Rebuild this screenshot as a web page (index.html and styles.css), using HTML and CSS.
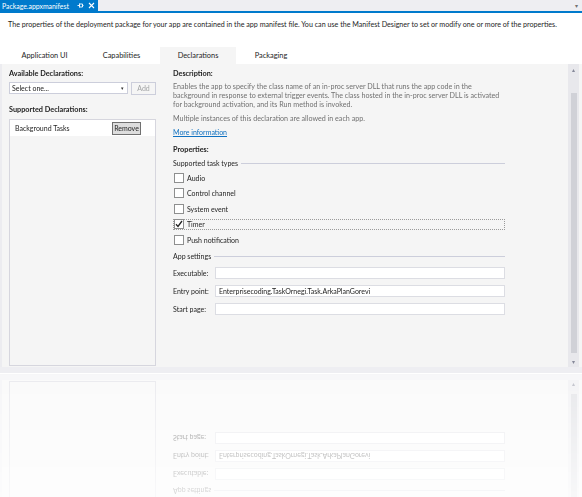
FILE: index.html
```html
<!DOCTYPE html>
<html>
<head>
    <title>Package.appxmanifest</title>
    <link rel="stylesheet" href="styles.css">
</head>
<body>
    <div class="doc-bar">
        <div class="doc-tab">
            <span class="doc-name">Package.appxmanifest</span>
            <svg class="doc-pin" width="7" height="7" viewBox="0 0 7 7"><path d="M0.5 3.5h2M2.5 1.5v4M2.5 2h3v3h-3M5.5 3.5h1" stroke="#fff" stroke-width="0.9" fill="none"/></svg>
            <svg class="doc-close" width="7" height="7" viewBox="0 0 7 7"><path d="M1 1l5 5M6 1l-5 5" stroke="#fff" stroke-width="1.1"/></svg>
        </div>
        <div class="doc-menu">&#9662;</div>
    </div>
    <div class="doc-line"></div>

    <p class="intro">The properties of the deployment package for your app are contained in the app manifest file. You can use the Manifest Designer to set or modify one or more of the properties.</p>

    <div class="tabs">
        <div class="tab">Application UI</div>
        <div class="tab">Capabilities</div>
        <div class="tab active">Declarations</div>
        <div class="tab">Packaging</div>
    </div>

    <div class="workspace">
        <div class="designer">
            <div class="side">
                <h3>Available Declarations:</h3>
                <div class="add-row">
                    <div class="select">Select one...<span class="select-arrow">&#9662;</span></div>
                    <div class="btn disabled">Add</div>
                </div>
                <h3>Supported Declarations:</h3>
                <div class="decl-list">
                    <div class="decl-item">
                        <span>Background Tasks</span>
                        <div class="btn remove">Remove</div>
                    </div>
                </div>
            </div>

            <div class="details">
                <h3>Description:</h3>
                <p class="desc">Enables the app to specify the class name of an in-proc server DLL that runs the app code in the background in response to external trigger events. The class hosted in the in-proc server DLL is activated for background activation, and its Run method is invoked.</p>
                <p class="desc">Multiple instances of this declaration are allowed in each app.</p>
                <a class="more" href="#">More information</a>

                <h3 class="props">Properties:</h3>
                <div class="group-title"><span>Supported task types</span></div>
                <div class="checks">
                    <label class="check"><span class="box"></span>Audio</label>
                    <label class="check"><span class="box"></span>Control channel</label>
                    <label class="check"><span class="box"></span>System event</label>
                    <label class="check focused"><span class="box"><svg width="8" height="8" viewBox="0 0 8 8"><path d="M1 4.2l2 2.2L7 1" stroke="#222" stroke-width="1.3" fill="none"/></svg></span>Timer</label>
                    <label class="check"><span class="box"></span>Push notification</label>
                </div>

                <div class="group-title settings"><span>App settings</span></div>
                <div class="field">
                    <span class="field-label">Executable:</span>
                    <div class="input"></div>
                </div>
                <div class="field">
                    <span class="field-label">Entry point:</span>
                    <div class="input">Enterprisecoding.TaskOrnegi.Task.ArkaPlanGorevi</div>
                </div>
                <div class="field">
                    <span class="field-label">Start page:</span>
                    <div class="input"></div>
                </div>
            </div>

            <div class="scrollbar">
                <span class="arrow">&#9652;</span>
                <div class="thumb"></div>
                <span class="arrow">&#9662;</span>
            </div>
        </div>
        <div class="status-strip"></div>
    </div>
</body>
</html>
```

FILE: styles.css
```css
* {
    box-sizing: border-box;
}
body {
    width: 582px;
    height: 497px;
    margin: 0;
    overflow: hidden;
    font-family: Lato, "Open Sans", sans-serif;
    font-size: 7px;
    color: #1e1e1e;
    background-color: #ffffff;
}
.doc-bar {
    display: flex;
    height: 11px;
    background-color: #eeeef2;
}
.doc-tab {
    display: flex;
    align-items: center;
    width: 98px;
    padding-left: 2px;
    background-color: #007acc;
    color: #ffffff;
    font-size: 6.9px;
}
.doc-name {
    flex: 1;
}
.doc-pin {
    margin-right: 4px;
}
.doc-close {
    margin-right: 3px;
}
.doc-menu {
    margin-left: auto;
    margin-right: 4px;
    color: #717171;
    font-size: 6px;
    line-height: 11px;
}
.doc-line {
    height: 2px;
    background-color: #007acc;
}
.intro {
    margin: 0;
    padding: 7px 8px 0 8px;
    height: 34px;
    line-height: 10px;
    font-size: 7.15px;
    white-space: nowrap;
}
.tabs {
    display: flex;
    height: 17px;
    padding-left: 6px;
}
.tab {
    width: 77px;
    text-align: center;
    line-height: 17px;
    font-size: 7.4px;
}
.tab.active {
    width: 76px;
    background-color: #f5f5f5;
}
.tab:last-child {
    width: 70px;
}
.workspace {
    -webkit-box-reflect: below 1px linear-gradient(to bottom, transparent 40%, rgba(0, 0, 0, 0.5));
}
.designer {
    display: flex;
    height: 303px;
    padding-left: 7px;
    background-color: #f5f5f5;
    border-left: 2px solid #ececf0;
}
.status-strip {
    height: 6px;
    background-color: #eeeef2;
}
h3 {
    margin: 0;
    font-size: 7.3px;
    font-weight: bold;
    line-height: 10px;
}
.side {
    display: flex;
    flex-direction: column;
    width: 147px;
    padding-top: 5px;
}
.add-row {
    display: flex;
    gap: 3px;
    margin-top: 3px;
    margin-bottom: 10px;
}
.select {
    position: relative;
    width: 119px;
    height: 12px;
    padding-left: 2px;
    line-height: 11px;
    background-color: #ffffff;
    border: 1px solid #cccedb;
}
.select-arrow {
    position: absolute;
    right: 3px;
    top: 0;
    font-size: 5px;
    color: #333;
}
.btn {
    height: 13px;
    text-align: center;
    line-height: 11px;
    border: 1px solid #cccedb;
}
.btn.disabled {
    width: 25px;
    color: #a2a4a5;
    background-color: #f5f5f5;
}
.decl-list {
    flex: 1;
    margin-top: 4px;
    margin-bottom: 1px;
    border: 1px solid #d6d6de;
    background-color: #f5f5f5;
}
.decl-item {
    display: flex;
    align-items: center;
    justify-content: space-between;
    height: 16px;
    padding: 0 14px 0 5px;
    background-color: #ffffff;
}
.btn.remove {
    width: 29px;
    color: #1e1e1e;
    background-color: #dddddd;
    border-color: #707070;
}
.details {
    flex: 1;
    padding: 5px 0 0 17px;
}
.details > * {
    width: 332px;
}
.desc {
    margin: 0 0 5px 0;
    line-height: 9px;
    color: #717171;
    font-size: 7.15px;
}
.desc:first-of-type {
    width: 329px;
    margin-top: 3px;
}
.more {
    display: block;
    line-height: 9px;
    color: #0e70c0;
}
.props {
    margin-top: 8px;
}
.group-title {
    display: flex;
    align-items: center;
    gap: 3px;
    margin-top: 3px;
    line-height: 10px;
}
.group-title::after {
    content: "";
    flex: 1;
    height: 1px;
    background-color: #cccedb;
}
.checks {
    display: flex;
    flex-direction: column;
    gap: 4.6px;
    margin-top: 4px;
}
.check {
    display: flex;
    align-items: center;
    gap: 3px;
    height: 11px;
    padding-left: 1px;
}
.check.focused {
    border: 1px dotted #9a9a9a;
    padding-left: 0;
}
.box {
    display: flex;
    align-items: center;
    justify-content: center;
    width: 10px;
    height: 10px;
    background-color: #ffffff;
    border: 1px solid #8e8f8f;
}
.group-title.settings {
    margin-top: 6px;
}
.field {
    display: flex;
    align-items: center;
    height: 12px;
    margin-top: 6px;
}
.field:first-of-type {
    margin-top: 9px;
}
.field-label {
    width: 42px;
}
.input {
    flex: 1;
    height: 12px;
    padding-left: 3px;
    line-height: 10px;
    background-color: #ffffff;
    border: 1px solid #dcdde3;
}
.scrollbar {
    display: flex;
    flex-direction: column;
    align-items: center;
    width: 11px;
    margin-right: 3px;
    background-color: #e8e8ec;
}
.arrow {
    height: 11px;
    font-size: 6px;
    line-height: 11px;
    color: #868999;
}
.thumb {
    flex: 1;
    width: 6px;
    margin: 18px 0 3px 0;
    background-color: #d0d1d7;
}
```
